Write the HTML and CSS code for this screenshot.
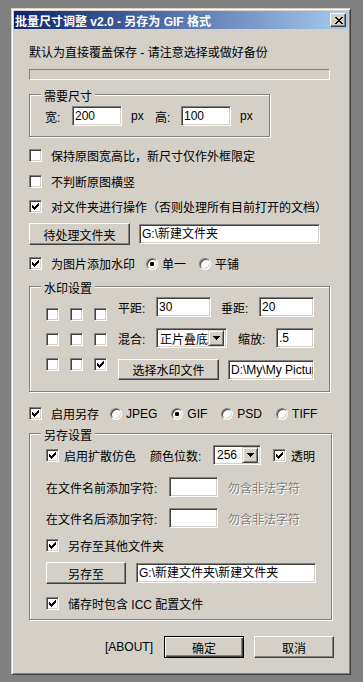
FILE: index.html
```html
<!DOCTYPE html>
<html>
<head>
    <meta charset="utf-8">
    <title>批量尺寸调整 v2.0</title>
    <link rel="stylesheet" href="styles.css">
</head>
<body>
<div class="window">
    <div class="titlebar">
        <span class="title">批量尺寸调整 v2.0 - 另存为 GIF 格式</span>
        <span class="close">
            <svg width="8" height="7" viewBox="0 0 8 7" shape-rendering="crispEdges"><path d="M0 0h2v1h-2z M6 0h2v1h-2z M1 1h2v1h-2z M5 1h2v1h-2z M2 2h4v1h-4z M3 3h2v1h-2z M2 4h4v1h-4z M1 5h2v1h-2z M5 5h2v1h-2z M0 6h2v1h-2z M6 6h2v1h-2z"/></svg>
        </span>
    </div>

    <div class="client">
        <div class="note">默认为直接覆盖保存 - 请注意选择或做好备份</div>
        <div class="progress"></div>

        <div class="group size">
            <div class="legend">需要尺寸</div>
            <div class="row">
                <span class="lbl-w">宽:</span>
                <div class="field w50">200</div>
                <span class="unit">px</span>
                <span class="lbl-h">高:</span>
                <div class="field w50">100</div>
                <span class="unit">px</span>
            </div>
        </div>

        <div class="check first">
            <span class="cb"></span>
            <span class="text">保持原图宽高比，新尺寸仅作外框限定</span>
        </div>
        <div class="check second">
            <span class="cb"></span>
            <span class="text">不判断原图横竖</span>
        </div>
        <div class="check third">
            <span class="cb"><svg width="7" height="7" viewBox="0 0 7 7" shape-rendering="crispEdges"><path d="M0 2H1V3H2V4H3V3H4V2H5V1H6V0H7V3H6V4H5V5H4V6H3V7H2V6H1V5H0Z"/></svg></span>
            <span class="text">对文件夹进行操作（否则处理所有目前打开的文档）</span>
        </div>

        <div class="row folder">
            <div class="btn w101">待处理文件夹</div>
            <div class="field path">G:\新建文件夹</div>
        </div>

        <div class="check watermark">
            <span class="cb"><svg width="7" height="7" viewBox="0 0 7 7" shape-rendering="crispEdges"><path d="M0 2H1V3H2V4H3V3H4V2H5V1H6V0H7V3H6V4H5V5H4V6H3V7H2V6H1V5H0Z"/></svg></span>
            <span class="text">为图片添加水印</span>
            <span class="radio on first-opt"></span>
            <span class="opt-text">单一</span>
            <span class="radio next-opt"></span>
            <span class="opt-text">平铺</span>
        </div>

        <div class="group mark">
            <div class="legend">水印设置</div>
            <div class="mark-body">
                <div class="grid">
                    <span class="cb"></span><span class="cb"></span><span class="cb"></span>
                    <span class="cb"></span><span class="cb"></span><span class="cb"></span>
                    <span class="cb"></span><span class="cb"></span>
                    <span class="cb"><svg width="7" height="7" viewBox="0 0 7 7" shape-rendering="crispEdges"><path d="M0 2H1V3H2V4H3V3H4V2H5V1H6V0H7V3H6V4H5V5H4V6H3V7H2V6H1V5H0Z"/></svg></span>
                </div>
                <div class="mark-fields">
                    <div class="mrow">
                        <span class="lbl38">平距:</span>
                        <div class="field w55">30</div>
                        <span class="lbl38 gap10">垂距:</span>
                        <div class="field w55">20</div>
                    </div>
                    <div class="mrow">
                        <span class="lbl38">混合:</span>
                        <div class="select w71">
                            <span class="value">正片叠底</span>
                            <span class="drop"><svg width="7" height="4" viewBox="0 0 7 4" shape-rendering="crispEdges"><path d="M0 0h7v1h-1v1h-1v1h-1v1h-1v-1h-1v-1h-1v-1h-1z"/></svg></span>
                        </div>
                        <span class="lbl38 gap11">缩放:</span>
                        <div class="field w38">.5</div>
                    </div>
                    <div class="mrow tall">
                        <div class="btn w101">选择水印文件</div>
                        <div class="field w86 gap9">D:\My\My Pictures</div>
                    </div>
                </div>
            </div>
        </div>

        <div class="check saveon">
            <span class="cb"><svg width="7" height="7" viewBox="0 0 7 7" shape-rendering="crispEdges"><path d="M0 2H1V3H2V4H3V3H4V2H5V1H6V0H7V3H6V4H5V5H4V6H3V7H2V6H1V5H0Z"/></svg></span>
            <span class="text">启用另存</span>
            <span class="radio first-opt"></span>
            <span class="opt-text">JPEG</span>
            <span class="radio on fmt"></span>
            <span class="opt-text">GIF</span>
            <span class="radio fmt"></span>
            <span class="opt-text">PSD</span>
            <span class="radio fmt"></span>
            <span class="opt-text">TIFF</span>
        </div>

        <div class="group saveas">
            <div class="legend">另存设置</div>
            <div class="srow dither">
                <span class="cb"><svg width="7" height="7" viewBox="0 0 7 7" shape-rendering="crispEdges"><path d="M0 2H1V3H2V4H3V3H4V2H5V1H6V0H7V3H6V4H5V5H4V6H3V7H2V6H1V5H0Z"/></svg></span>
                <span class="near">启用扩散仿色</span>
                <span class="lbl-colors">颜色位数:</span>
                <div class="select w48">
                    <span class="value">256</span>
                    <span class="drop"><svg width="7" height="4" viewBox="0 0 7 4" shape-rendering="crispEdges"><path d="M0 0h7v1h-1v1h-1v1h-1v1h-1v-1h-1v-1h-1v-1h-1z"/></svg></span>
                </div>
                <span class="cb gap12"><svg width="7" height="7" viewBox="0 0 7 7" shape-rendering="crispEdges"><path d="M0 2H1V3H2V4H3V3H4V2H5V1H6V0H7V3H6V4H5V5H4V6H3V7H2V6H1V5H0Z"/></svg></span>
                <span class="near">透明</span>
            </div>
            <div class="srow prefix">
                <span class="lbl123">在文件名前添加字符:</span>
                <div class="field w49"></div>
                <span class="disabled">勿含非法字符</span>
            </div>
            <div class="srow suffix">
                <span class="lbl123">在文件名后添加字符:</span>
                <div class="field w49"></div>
                <span class="disabled">勿含非法字符</span>
            </div>
            <div class="srow other">
                <span class="cb"><svg width="7" height="7" viewBox="0 0 7 7" shape-rendering="crispEdges"><path d="M0 2H1V3H2V4H3V3H4V2H5V1H6V0H7V3H6V4H5V5H4V6H3V7H2V6H1V5H0Z"/></svg></span>
                <span class="text">另存至其他文件夹</span>
            </div>
            <div class="srow target">
                <div class="btn w80">另存至</div>
                <div class="field w180">G:\新建文件夹\新建文件夹</div>
            </div>
            <div class="srow icc">
                <span class="cb"><svg width="7" height="7" viewBox="0 0 7 7" shape-rendering="crispEdges"><path d="M0 2H1V3H2V4H3V3H4V2H5V1H6V0H7V3H6V4H5V5H4V6H3V7H2V6H1V5H0Z"/></svg></span>
                <span class="text">储存时包含 ICC 配置文件</span>
            </div>
        </div>

        <div class="footer">
            <span class="about">[ABOUT]</span>
            <div class="btn default w80">确定</div>
            <div class="btn w80 cancel">取消</div>
        </div>
    </div>
</div>
</body>
</html>
```

FILE: styles.css
```css
body {
    margin: 0;
    background-color: #808080;
    font-family: "Liberation Sans", "Noto Sans CJK SC", sans-serif;
    font-size: 12px;
    color: #000;
}
.window {
    margin: 8px 0 0 11px;
    width: 340px;
    height: 667px;
    box-sizing: border-box;
    padding: 2px;
    background-color: #d4d0c8;
    border: 1px solid;
    border-color: #d4d0c8 #404040 #404040 #d4d0c8;
    box-shadow: inset 1px 1px #fff, inset -1px -1px #808080;
}
.titlebar {
    display: flex;
    align-items: center;
    height: 18px;
    padding-left: 1px;
    background: linear-gradient(to right, #0a246a, #a6caf0);
    color: #fff;
    font-weight: bold;
}
.close {
    margin-left: auto;
    margin-right: 2px;
    width: 16px;
    height: 14px;
    box-sizing: border-box;
    display: flex;
    align-items: center;
    justify-content: center;
    padding-left: 1px;
    background-color: #d4d0c8;
    border: 1px solid;
    border-color: #fff #404040 #404040 #fff;
    box-shadow: inset -1px -1px #808080;
}
.client {
    padding-left: 15px;
}
.note {
    margin-top: 16px;
    line-height: 16px;
    white-space: nowrap;
}
.progress {
    margin-top: 8px;
    width: 301px;
    height: 11px;
    box-sizing: border-box;
    border: 1px solid;
    border-color: #808080 #fff #fff #808080;
}

/* common controls */
.row {
    display: flex;
    align-items: center;
}
.field {
    box-sizing: border-box;
    height: 20px;
    padding-left: 2px;
    line-height: 18px;
    white-space: nowrap;
    overflow: hidden;
    background-color: #fff;
    border: 1px solid;
    border-color: #808080 #fff #fff #808080;
    box-shadow: inset 1px 1px #404040, inset -1px -1px #d4d0c8;
    flex: none;
}
.btn {
    box-sizing: border-box;
    height: 22px;
    display: flex;
    align-items: center;
    justify-content: center;
    background-color: #d4d0c8;
    border: 1px solid;
    border-color: #fff #404040 #404040 #fff;
    box-shadow: inset -1px -1px #808080;
    flex: none;
}
.btn.default {
    border-color: #000;
    box-shadow: inset 1px 1px #fff, inset -1px -1px #404040, inset -2px -2px #808080;
}
.select {
    box-sizing: border-box;
    height: 20px;
    display: flex;
    align-items: center;
    padding: 2px;
    background-color: #fff;
    border: 1px solid;
    border-color: #808080 #fff #fff #808080;
    box-shadow: inset 1px 1px #404040, inset -1px -1px #d4d0c8;
    flex: none;
}
.select .value {
    flex: 1;
    padding-left: 1px;
    white-space: nowrap;
}
.drop {
    width: 16px;
    height: 16px;
    box-sizing: border-box;
    display: flex;
    align-items: center;
    justify-content: center;
    background-color: #d4d0c8;
    border: 1px solid;
    border-color: #d4d0c8 #404040 #404040 #d4d0c8;
    box-shadow: inset 1px 1px #fff, inset -1px -1px #808080;
}
.cb {
    width: 13px;
    height: 13px;
    box-sizing: border-box;
    display: flex;
    align-items: center;
    justify-content: center;
    background-color: #fff;
    border: 1px solid;
    border-color: #808080 #fff #fff #808080;
    box-shadow: inset 1px 1px #404040, inset -1px -1px #d4d0c8;
    flex: none;
}
.radio {
    width: 12px;
    height: 12px;
    box-sizing: border-box;
    display: flex;
    align-items: center;
    justify-content: center;
    border-radius: 50%;
    background-color: #fff;
    border: 1px solid;
    border-color: #808080 #fff #fff #808080;
    box-shadow: inset 1px 1px #404040, inset -1px -1px #d4d0c8;
    flex: none;
}
.radio.on::after {
    content: "";
    width: 4px;
    height: 4px;
    border-radius: 1px;
    background-color: #000;
}
.check {
    display: flex;
    align-items: center;
    height: 13px;
    white-space: nowrap;
}
.check .text {
    margin-left: 9px;
}
.first-opt {
    margin-left: 11px;
}
.opt-text {
    margin-left: 4px;
}
.next-opt {
    margin-left: 13px;
}
.fmt {
    margin-left: 14px;
}

/* group boxes */
.group {
    box-sizing: border-box;
    border: 1px solid #808080;
    box-shadow: inset 1px 1px #fff, 1px 1px #fff;
}
.legend {
    width: fit-content;
    margin: -5px 0 0 11px;
    padding: 0 3px 0 3px;
    line-height: 14px;
    background-color: #d4d0c8;
}

/* size */
.size {
    margin-top: 14px;
    width: 241px;
    height: 43px;
}
.size .row {
    margin-top: 2px;
    height: 20px;
    padding-left: 15px;
}
.lbl-w {
    width: 27px;
}
.lbl-h {
    width: 26px;
}
.unit {
    margin-left: 9px;
    width: 24px;
}
.w50 { width: 50px; }

.check.first { margin-top: 12px; }
.check.second { margin-top: 13px; }
.check.third { margin-top: 12px; }
.folder {
    margin-top: 10px;
}
.w101 { width: 101px; }
.path {
    margin-left: 9px;
    width: 181px;
}
.check.watermark { margin-top: 12px; }

/* watermark */
.mark {
    margin-top: 16px;
    width: 301px;
    height: 106px;
}
.mark-body {
    display: flex;
    align-items: flex-start;
}
.grid {
    display: grid;
    grid-template-columns: repeat(3, 13px);
    column-gap: 11px;
    row-gap: 12px;
    margin: 12px 0 0 16px;
}
.mark-fields {
    margin: 1px 0 0 11px;
}
.mrow {
    display: flex;
    align-items: center;
    height: 20px;
    white-space: nowrap;
}
.mrow + .mrow {
    margin-top: 11px;
}
.mrow.tall {
    height: 21px;
}
.mrow.tall .btn {
    height: 21px;
}
.lbl38 { width: 38px; }
.gap9 { margin-left: 9px; }
.gap10 { margin-left: 10px; }
.gap11 { margin-left: 11px; }
.gap12 { margin-left: 12px; }
.w55 { width: 55px; }
.w71 { width: 71px; }
.w38 { width: 38px; }
.w86 { width: 86px; }

.check.saveon { margin-top: 15px; }

/* save as */
.saveas {
    margin-top: 13px;
    width: 303px;
    height: 187px;
}
.srow {
    display: flex;
    align-items: center;
    height: 20px;
    padding-left: 16px;
    white-space: nowrap;
}
.srow .near {
    margin-left: 5px;
}
.srow .text {
    margin-left: 9px;
}
.dither { margin-top: 2px; }
.lbl-colors {
    margin-left: 14px;
    width: 63px;
}
.w48 { width: 48px; }
.prefix { margin-top: 12px; }
.suffix { margin-top: 11px; }
.lbl123 { width: 123px; }
.w49 { width: 49px; }
.disabled {
    margin-left: 10px;
    color: #808080;
    text-shadow: 1px 1px #fff;
}
.other {
    margin-top: 11px;
    height: 13px;
}
.target {
    margin-top: 10px;
    height: 22px;
}
.w80 { width: 80px; }
.w180 {
    margin-left: 10px;
    width: 180px;
}
.icc {
    margin-top: 13px;
    height: 13px;
}

/* footer */
.footer {
    margin-top: 16px;
    display: flex;
    align-items: center;
    justify-content: flex-end;
    padding-right: 14px;
}
.about {
    margin-right: 11px;
}
.cancel {
    margin-left: 10px;
}
```
